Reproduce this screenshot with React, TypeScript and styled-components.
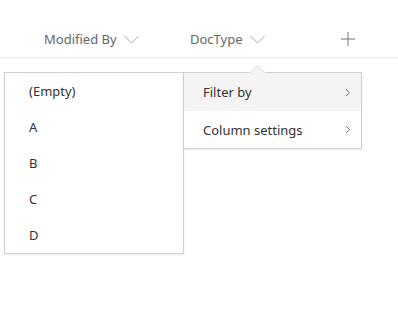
import React from "react";
import styled, { createGlobalStyle } from "styled-components";

const GlobalStyle = createGlobalStyle`
  html, body {
    margin: 0;
    padding: 0;
    background: #ffffff;
    font-family: "Noto Sans", "Open Sans", sans-serif;
  }
`;

const Page = styled.div`
  position: relative;
  width: 398px;
  height: 326px;
  overflow: hidden;
  background: #fff;
`;

const HeaderRow = styled.div`
  display: flex;
  align-items: center;
  height: 37px;
  padding: 20px 0 0 44px;
  border-bottom: 1px solid #e8e8e8;
  color: #666666;
  font-size: 13px;
`;

const HeaderCell = styled.div<{ $width: number }>`
  display: flex;
  align-items: center;
  gap: 7px;
  width: ${(p) => p.$width}px;
  flex-shrink: 0;
`;

const AddCell = styled.div`
  display: flex;
  align-items: center;
  justify-content: center;
  margin-left: 63px;
  width: 14px;
`;

const Menu = styled.div<{ $left: number; $width: number; $z: number }>`
  position: absolute;
  top: 72px;
  left: ${(p) => p.$left}px;
  width: ${(p) => p.$width}px;
  background: #fff;
  border: 1px solid #d0d0d0;
  box-shadow: 0 1px 2px rgba(0, 0, 0, 0.08);
  z-index: ${(p) => p.$z};
  color: #333333;
  font-size: 13px;
`;

const Beak = styled.div`
  position: absolute;
  top: 67px;
  left: 252px;
  width: 10px;
  height: 10px;
  background: #f4f4f4;
  border-left: 1px solid #e4e4e4;
  border-top: 1px solid #e4e4e4;
  transform: rotate(45deg);
  z-index: 3;
`;

const Item = styled.div<{ $height: number; $pad: number; $active?: boolean }>`
  display: flex;
  align-items: center;
  justify-content: space-between;
  height: ${(p) => p.$height}px;
  padding: 0 10px 0 ${(p) => p.$pad}px;
  background: ${(p) => (p.$active ? "#f4f4f4" : "transparent")};
`;

const Chevron = () => (
  <svg width="15" height="9" viewBox="0 0 15 9" style={{ marginTop: 2 }}>
    <polyline points="0.5,1 7.5,8 14.5,1" fill="none" stroke="#a6a6a6" strokeWidth="1" />
  </svg>
);

const Plus = () => (
  <svg width="14" height="14" viewBox="0 0 14 14">
    <line x1="7" y1="0" x2="7" y2="14" stroke="#777" strokeWidth="1" />
    <line x1="0" y1="7" x2="14" y2="7" stroke="#777" strokeWidth="1" />
  </svg>
);

const RightArrow = () => (
  <svg width="6" height="9" viewBox="0 0 6 9">
    <polyline points="1,1 4.5,4.5 1,8" fill="none" stroke="#777" strokeWidth="1" />
  </svg>
);

const values = ["(Empty)", "A", "B", "C", "D"];

export default function App() {
  return (
    <Page>
      <GlobalStyle />
      <HeaderRow>
        <HeaderCell $width={146}>
          Modified By <Chevron />
        </HeaderCell>
        <HeaderCell $width={88}>
          DocType <Chevron />
        </HeaderCell>
        <AddCell>
          <Plus />
        </AddCell>
      </HeaderRow>

      <Menu $left={4} $width={178} $z={1}>
        {values.map((v) => (
          <Item key={v} $height={36} $pad={24}>
            {v}
          </Item>
        ))}
      </Menu>

      <Beak />
      <Menu $left={183} $width={177} $z={2}>
        <Item $height={38} $pad={19} $active>
          Filter by <RightArrow />
        </Item>
        <Item $height={37} $pad={19}>
          Column settings <RightArrow />
        </Item>
      </Menu>
    </Page>
  );
}
